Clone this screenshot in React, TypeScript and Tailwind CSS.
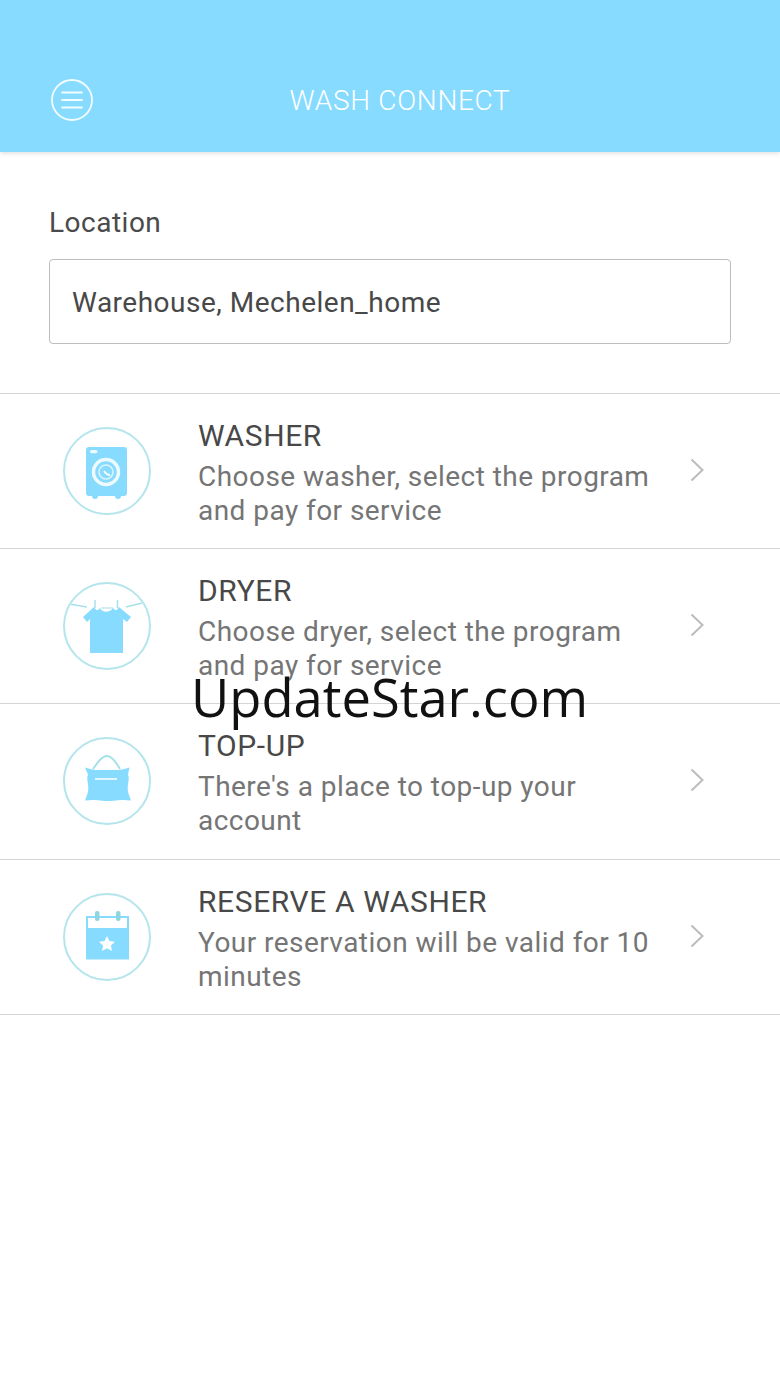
import { ReactNode } from 'react';

const roboto = { fontFamily: 'Roboto, sans-serif' };

// All four glyphs are drawn in the 88x88 box of the round badge, minus its border
function WasherIcon() {
  return (
    <svg viewBox="2 2 84 84" className="w-full h-full">
      <path d="M26 20h35a3 3 0 0 1 3 3v43a3 3 0 0 1-3 3h-3a3 3 0 0 1-6 0H35a3 3 0 0 1-6 0h-3a3 3 0 0 1-3-3V23a3 3 0 0 1 3-3z" fill="#87DBFF" />
      <rect x="27" y="23" width="7.500" height="3.200" rx="1.600" fill="#fff" fillOpacity="0.85" />
      <circle cx="43" cy="45" r="12.500" fill="none" stroke="#fff" strokeOpacity="0.85" strokeWidth="3.500" />
      <circle cx="43" cy="45" r="7" fill="none" stroke="#fff" strokeOpacity="0.7" strokeWidth="1.500" />
      <path d="M41 44c2 3 4 4 6 4" fill="none" stroke="#fff" strokeWidth="1.800" />
    </svg>
  );
}

function ShirtIcon() {
  return (
    <svg viewBox="2 2 84 84" className="w-full h-full">
      <path d="M6 22l18 3M63 25l16-4" stroke="#A6E0E8" strokeWidth="1.500" fill="none" />
      <path d="M32 18v8M54.500 18v8" stroke="#A6E0E8" strokeWidth="1.500" />
      <path d="M38 26h12" stroke="#A6E0E8" strokeWidth="1.200" />
      <path d="M31 25c3 5 4 3 6 1 2 5 10 5 13 0 2 2 3 4 6-1l12 10-4 5-4-3v34H27V37l-3 3-4-5z" fill="#87DBFF" />
    </svg>
  );
}

function BagIcon() {
  return (
    <svg viewBox="2 2 84 84" className="w-full h-full">
      <path d="M30 32c5-7 9-13 14-13s9 6 13 13" fill="none" stroke="#A6E0E8" strokeWidth="2" />
      <path d="M22 30.500c5 1.500 8 2.500 11 2.500h22c3 0 7-1 11.500-2.500l-1.500 7c1.500 3 .500 6 0 9.500-.500 4-.500 8 1 11l2 5.500-8-.500c-4-.500-9 1-15 1s-11-1.500-15-1l-8 .500 2-5.500c1.500-3 1.500-7 1-11-.500-3.500-1.500-6.500 0-9.500z" fill="#87DBFF" />
      <path d="M32 42h22" stroke="#fff" strokeWidth="1.500" />
    </svg>
  );
}

function CalendarIcon() {
  return (
    <svg viewBox="2 2 84 84" className="w-full h-full">
      <path d="M24 24v11M65 24v11" stroke="#87DBFF" strokeWidth="2" />
      <path d="M23 24h43" stroke="#87DBFF" strokeWidth="2" />
      <rect x="32" y="18" width="4.500" height="10" rx="2" fill="#8CD6E0" />
      <rect x="53" y="18" width="4.500" height="10" rx="2" fill="#8CD6E0" />
      <rect x="23" y="35" width="43" height="31.500" fill="#87DBFF" />
      <path d="M44 43l2.400 5 5.600.7-4.100 3.800 1.100 5.500-5-2.800-5 2.800 1.100-5.500-4.100-3.800 5.600-.7z" fill="#fff" />
    </svg>
  );
}

type Service = {
  title: string;
  lines: string[];
  icon: ReactNode;
};

const services: Service[] = [
  {
    title: 'WASHER',
    lines: ['Choose washer, select the program', 'and pay for service'],
    icon: <WasherIcon />,
  },
  {
    title: 'DRYER',
    lines: ['Choose dryer, select the program', 'and pay for service'],
    icon: <ShirtIcon />,
  },
  {
    title: 'TOP-UP',
    lines: ["There's a place to top-up your", 'account'],
    icon: <BagIcon />,
  },
  {
    title: 'RESERVE A WASHER',
    lines: ['Your reservation will be valid for 10', 'minutes'],
    icon: <CalendarIcon />,
  },
];

function ServiceRow({ service }: { service: Service }) {
  return (
    <div className="flex items-center h-[155.200px] pl-[63px] pr-[76px] border-b border-[#d4d4d4]">
      <div className="w-[88px] h-[88px] rounded-full border-2 border-[#b4e5ec] shrink-0 overflow-hidden">
        {service.icon}
      </div>
      <div className="ml-[47px] flex-1 pt-[4px]">
        <div className="text-[30px] leading-[36px] tracking-[0.6px] text-[#484848] mb-[6px]">{service.title}</div>
        {service.lines.map((line) => (
          <div key={line} className="text-[28px] leading-[34px] tracking-[0.45px] text-[#757575] whitespace-nowrap">
            {line}
          </div>
        ))}
      </div>
      <svg viewBox="0 0 14 24" className="mb-[2px] w-[14px] h-[24px] shrink-0">
        <path d="M1.500 1.500L12.500 12L1.500 22.500" fill="none" stroke="#bcbcbc" strokeWidth="2" />
      </svg>
    </div>
  );
}

export default function App() {
  return (
    <div className="relative w-[780px] h-[1387px] bg-white overflow-hidden" style={roboto}>
      <header className="h-[152px] bg-[#87DBFF] flex items-center pt-[47px] pl-[51px] shadow-[0_1px_5px_rgba(0,0,0,0.15)]">
        <svg viewBox="0 0 42 42" className="w-[42px] h-[42px] shrink-0">
          <circle cx="21" cy="21" r="20" fill="none" stroke="#fff" strokeOpacity="0.9" strokeWidth="1.800" />
          <path d="M11 13.500h20M11 21h20M11 28.500h20" stroke="#fff" strokeOpacity="0.9" strokeWidth="1.800" strokeLinecap="round" />
        </svg>
        <h1 className="flex-1 pr-[73px] pt-[3px] text-center text-[28px] tracking-[0.7px] font-light text-white">WASH CONNECT</h1>
      </header>

      <section className="px-[49px] pt-[53px] pb-[49px]">
        <label className="block text-[28px] leading-[36px] tracking-[0.5px] text-[#4a4a4a] mb-[18px]">Location</label>
        <div className="h-[85px] border border-[#bdbdbd] rounded-[4px] flex items-center px-[22px] pt-[3px] text-[28px] tracking-[0.5px] text-[#484848]">
          Warehouse, Mechelen_home
        </div>
      </section>

      <div className="border-t border-[#d4d4d4]">
        {services.map((service) => (
          <ServiceRow key={service.title} service={service} />
        ))}
      </div>

      {/* site stamp across the list */}
      <div
        className="absolute left-[191px] top-[661px] text-[52.500px] leading-[72px] text-[#111111] whitespace-nowrap"
        style={{ fontFamily: '"Open Sans", sans-serif' }}
      >
        UpdateStar.com
      </div>
    </div>
  );
}
